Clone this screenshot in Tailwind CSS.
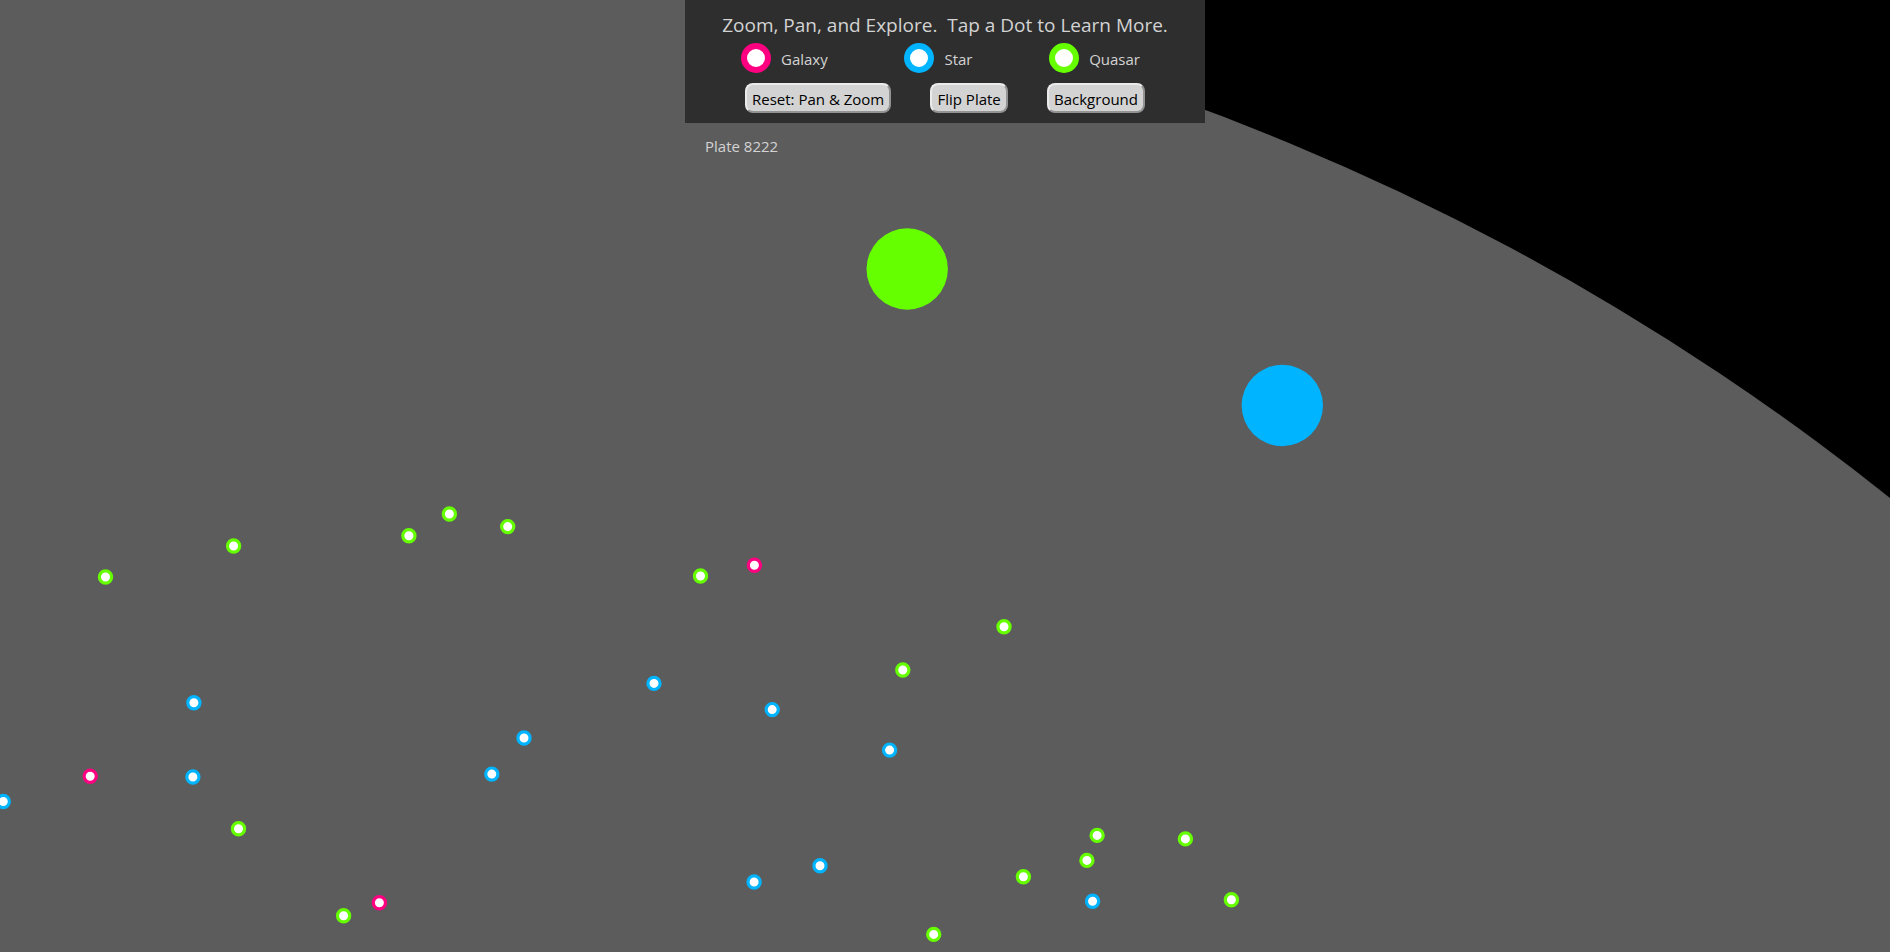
<!DOCTYPE html>
<html lang="en">
<head>
<meta charset="utf-8">
<title>Plate 8222</title>
<script src="https://cdn.jsdelivr.net/npm/@tailwindcss/browser@4"></script>
</head>
<body class="relative min-h-screen overflow-hidden bg-black font-['Open_Sans','Noto_Sans',sans-serif] text-[15px] leading-5 text-[#d3d3d3]">


<svg class="absolute inset-0 h-full w-full" role="img" aria-label="Plate 8222 objects">
  <circle cx="333" cy="2447.5" r="2495" fill="#5c5c5c"/>
  <circle cx="907.2" cy="269" r="40.7" fill="#66ff00"/>
  <circle cx="1282.3" cy="405.5" r="40.7" fill="#00b4ff"/>
  <g fill="#fff" stroke="#66ff00" stroke-width="3.2">
    <circle cx="105.5" cy="577" r="6.1"/>
    <circle cx="233.6" cy="546" r="6.1"/>
    <circle cx="408.9" cy="535.8" r="6.1"/>
    <circle cx="449.4" cy="514" r="6.1"/>
    <circle cx="507.7" cy="526.6" r="6.1"/>
    <circle cx="238.5" cy="828.8" r="6.1"/>
    <circle cx="343.6" cy="915.8" r="6.1"/>
    <circle cx="700.5" cy="576" r="6.1"/>
    <circle cx="1004" cy="626.7" r="6.1"/>
    <circle cx="902.8" cy="670" r="6.1"/>
    <circle cx="1023.4" cy="876.7" r="6.1"/>
    <circle cx="933.7" cy="934.4" r="6.1"/>
    <circle cx="1097.1" cy="835.4" r="6.1"/>
    <circle cx="1086.9" cy="860.4" r="6.1"/>
    <circle cx="1185.4" cy="838.9" r="6.1"/>
    <circle cx="1231.4" cy="899.8" r="6.1"/>
  </g>
  <g fill="#fff" stroke="#00b4ff" stroke-width="3.2">
    <circle cx="193.9" cy="702.7" r="6.1"/>
    <circle cx="192.9" cy="777" r="6.1"/>
    <circle cx="3.3" cy="801.5" r="6.1"/>
    <circle cx="524" cy="738" r="6.1"/>
    <circle cx="491.8" cy="774.1" r="6.1"/>
    <circle cx="654" cy="683.4" r="6.1"/>
    <circle cx="772.2" cy="709.6" r="6.1"/>
    <circle cx="889.6" cy="750.1" r="6.1"/>
    <circle cx="820" cy="865.7" r="6.1"/>
    <circle cx="754.1" cy="882" r="6.1"/>
    <circle cx="1092.6" cy="901.3" r="6.1"/>
  </g>
  <g fill="#fff" stroke="#ff0080" stroke-width="3.2">
    <circle cx="90.2" cy="776.3" r="6.1"/>
    <circle cx="379.4" cy="902.7" r="6.1"/>
    <circle cx="754.4" cy="565.2" r="6.1"/>
  </g>
</svg>

<main class="relative mx-auto w-full max-w-[520px]">
  <header class="flex flex-col bg-[#2e2e2e] pt-[11px] pb-[10px]">
    <h1 class="text-center text-[19px] leading-7 whitespace-pre">Zoom, Pan, and Explore.  Tap a Dot to Learn More.</h1>
    <ul class="mt-1 flex justify-between pr-[65px] pl-14">
      <li class="flex items-center gap-[10px]">
        <svg class="size-[30px]" viewBox="0 0 30 30" aria-hidden="true"><circle cx="15" cy="15" r="12" fill="#fff" stroke="#ff0080" stroke-width="6"/></svg>
        <span class="pt-px">Galaxy</span>
      </li>
      <li class="flex items-center gap-[10px]">
        <svg class="size-[30px]" viewBox="0 0 30 30" aria-hidden="true"><circle cx="15" cy="15" r="12" fill="#fff" stroke="#00b4ff" stroke-width="6"/></svg>
        <span class="pt-px">Star</span>
      </li>
      <li class="flex items-center gap-[10px]">
        <svg class="size-[30px]" viewBox="0 0 30 30" aria-hidden="true"><circle cx="15" cy="15" r="12" fill="#fff" stroke="#66ff00" stroke-width="6"/></svg>
        <span class="pt-px">Quasar</span>
      </li>
    </ul>
    <div class="mt-[10px] flex justify-between px-[60px] text-black">
      <button type="button" class="h-[30px] rounded-lg border-2 border-t-[#ebebeb] border-r-[#939393] border-b-[#939393] border-l-[#ebebeb] bg-[#d3d3d3] px-[5px] pt-px">Reset: Pan &amp; Zoom</button>
      <button type="button" class="h-[30px] rounded-lg border-2 border-t-[#ebebeb] border-r-[#939393] border-b-[#939393] border-l-[#ebebeb] bg-[#d3d3d3] px-[5px] pt-px">Flip Plate</button>
      <button type="button" class="h-[30px] rounded-lg border-2 border-t-[#ebebeb] border-r-[#939393] border-b-[#939393] border-l-[#ebebeb] bg-[#d3d3d3] px-[5px] pt-px">Background</button>
    </div>
  </header>
  <p class="px-5 pt-[13px]">Plate 8222</p>
</main>
</body>
</html>
